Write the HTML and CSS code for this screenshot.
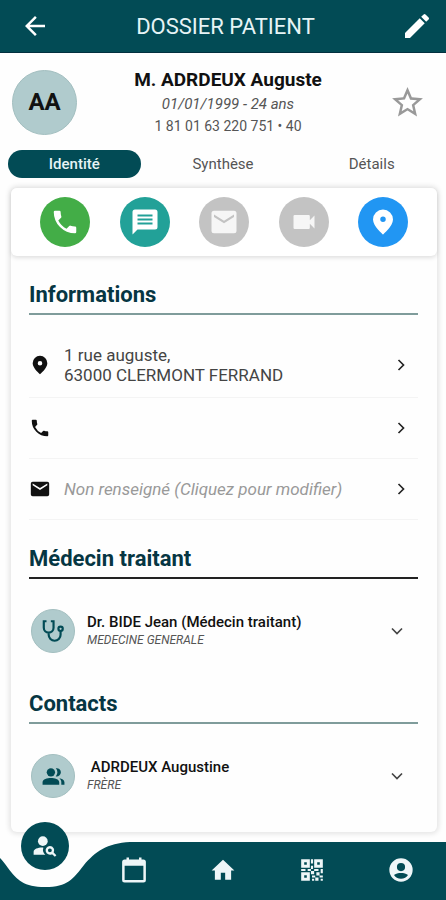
FILE: index.html
```html
<!DOCTYPE html>
<html lang="fr">
<head>
  <meta charset="UTF-8" />
  <meta name="viewport" content="width=device-width, initial-scale=1.0"/>
  <title>Dossier patient</title>
  <link rel="stylesheet" href="styles.css">
</head>
<body>

  <header class="top-bar">
    <button class="icon-btn" aria-label="Retour">
      <svg width="30" height="30" viewBox="0 0 24 24"><path d="M20 11H7.8l5.600-5.600L12 4l-8 8 8 8 1.400-1.400L7.800 13H20z"/></svg>
    </button>
    <h1>DOSSIER PATIENT</h1>
    <button class="icon-btn" aria-label="Modifier">
      <svg width="32" height="32" viewBox="0 0 24 24"><path d="M3 17.250V21h3.750L17.810 9.940l-3.750-3.750zM20.710 7.040a1 1 0 0 0 0-1.410l-2.340-2.340a1 1 0 0 0-1.410 0l-1.830 1.830 3.750 3.750z"/></svg>
    </button>
  </header>

  <section class="patient">
    <div class="avatar">AA</div>
    <div class="patient-text">
      <h2>M. ADRDEUX Auguste</h2>
      <p class="birth">01/01/1999 - 24 ans</p>
      <p class="number">1 81 01 63 220 751 • 40</p>
    </div>
    <button class="star-btn" aria-label="Favori">
      <svg width="37" height="37" viewBox="0 0 24 24"><path d="M22 9.240l-7.190-.62L12 2 9.190 8.630 2 9.240l5.460 4.730L5.820 21 12 17.270 18.180 21l-1.630-7.030zM12 15.400l-3.760 2.270 1-4.280-3.320-2.880 4.380-.38L12 6.100l1.710 4.040 4.380.38-3.320 2.880 1 4.280z"/></svg>
    </button>
  </section>

  <nav class="tabs">
    <button class="tab active">Identité</button>
    <button class="tab">Synthèse</button>
    <button class="tab">Détails</button>
  </nav>

  <main class="card">
    <div class="actions">
      <button class="action green" aria-label="Appeler">
        <svg width="30" height="30" viewBox="0 0 24 24"><path d="M6.620 10.790a15.150 15.150 0 0 0 6.590 6.590l2.200-2.200a1 1 0 0 1 1.020-.24c1.120.37 2.330.57 3.570.57a1 1 0 0 1 1 1V20a1 1 0 0 1-1 1A17 17 0 0 1 3 4a1 1 0 0 1 1-1h3.500a1 1 0 0 1 1 1c0 1.250.2 2.450.57 3.570a1 1 0 0 1-.25 1.020z"/></svg>
      </button>
      <button class="action teal" aria-label="Message">
        <svg width="30" height="30" viewBox="0 0 24 24"><path d="M20 2H4a2 2 0 0 0-2 2v18l4-4h14a2 2 0 0 0 2-2V4a2 2 0 0 0-2-2zM6 6h12v1.600H6zm0 3.200h12v1.600H6zm0 3.200h12V14H6z"/></svg>
      </button>
      <button class="action grey" aria-label="E-mail">
        <svg width="30" height="30" viewBox="0 0 24 24"><path d="M20 3H4a2 2 0 0 0-2 2v14a2 2 0 0 0 2 2h16a2 2 0 0 0 2-2V5a2 2 0 0 0-2-2zm0 5l-8 5-8-5V6l8 5 8-5z"/></svg>
      </button>
      <button class="action grey" aria-label="Vidéo">
        <svg width="28" height="28" viewBox="0 0 24 24"><path d="M17 10.500V7a1 1 0 0 0-1-1H4a1 1 0 0 0-1 1v10a1 1 0 0 0 1 1h12a1 1 0 0 0 1-1v-3.500l4 4v-11z"/></svg>
      </button>
      <button class="action blue" aria-label="Itinéraire">
        <svg width="30" height="30" viewBox="0 0 24 24"><path d="M12 2a8 8 0 0 0-8 8c0 5.500 8 12 8 12s8-6.500 8-12a8 8 0 0 0-8-8zm0 10a2.200 2.200 0 1 1 0-4.400 2.200 2.200 0 0 1 0 4.400z"/></svg>
      </button>
    </div>

    <section class="block">
      <h3>Informations</h3>
      <div class="list">
        <button class="info-row">
          <svg width="22" height="22" viewBox="0 0 24 24"><path d="M12 2a8 8 0 0 0-8 8c0 5.500 8 12 8 12s8-6.500 8-12a8 8 0 0 0-8-8zm0 10.500a2.500 2.500 0 1 1 0-5 2.500 2.500 0 0 1 0 5z"/></svg>
          <span class="info-text">1 rue auguste,<br>63000 CLERMONT FERRAND</span>
          <svg class="chevron" width="20" height="20" viewBox="0 0 24 24"><path d="M9 6l6 6-6 6"/></svg>
        </button>
        <button class="info-row" aria-label="Téléphone">
          <svg width="22" height="22" viewBox="0 0 24 24"><path d="M6.620 10.790a15.150 15.150 0 0 0 6.590 6.590l2.200-2.200a1 1 0 0 1 1.020-.24c1.120.37 2.330.57 3.570.57a1 1 0 0 1 1 1V20a1 1 0 0 1-1 1A17 17 0 0 1 3 4a1 1 0 0 1 1-1h3.500a1 1 0 0 1 1 1c0 1.250.2 2.450.57 3.570a1 1 0 0 1-.25 1.020z"/></svg>
          <span class="info-text"></span>
          <svg class="chevron" width="20" height="20" viewBox="0 0 24 24"><path d="M9 6l6 6-6 6"/></svg>
        </button>
        <button class="info-row">
          <svg width="22" height="22" viewBox="0 0 24 24"><path d="M20 4H4a2 2 0 0 0-2 2v12a2 2 0 0 0 2 2h16a2 2 0 0 0 2-2V6a2 2 0 0 0-2-2zm0 4l-8 5-8-5V6l8 5 8-5z"/></svg>
          <span class="info-text empty">Non renseigné (Cliquez pour modifier)</span>
          <svg class="chevron" width="20" height="20" viewBox="0 0 24 24"><path d="M9 6l6 6-6 6"/></svg>
        </button>
      </div>
    </section>

    <section class="block">
      <h3 class="dark-line">Médecin traitant</h3>
      <div class="list">
        <button class="person-row">
          <span class="person-icon">
            <svg class="outline" width="26" height="26" viewBox="0 0 24 24"><path d="M6 3H3.500v6a4.500 4.500 0 0 0 9 0V3H10M8 13.500v2a5.500 5.500 0 0 0 11 0V12"/><circle cx="19" cy="10" r="2"/></svg>
          </span>
          <span class="person-text">
            <span class="person-name">Dr. BIDE Jean (Médecin traitant)</span>
            <span class="person-role">MEDECINE GENERALE</span>
          </span>
          <svg class="chevron down" width="20" height="20" viewBox="0 0 24 24"><path d="M6 9l6 6 6-6"/></svg>
        </button>
      </div>
    </section>

    <section class="block">
      <h3>Contacts</h3>
      <div class="list">
        <button class="person-row">
          <span class="person-icon">
            <svg width="25" height="25" viewBox="0 0 24 24"><circle cx="9.500" cy="8" r="4"/><path d="M1.500 20v-2.500c0-2.700 4.500-4 8-4s8 1.300 8 4V20zM14.200 11.900a5.700 5.700 0 0 0 0-7.800 4 4 0 1 1 0 7.800zM17.500 13.700c2.700.5 5 1.700 5 3.800V20h-3v-2.500c0-1.600-.8-2.800-2-3.800z"/></svg>
          </span>
          <span class="person-text">
            <span class="person-name">&nbsp;ADRDEUX Augustine</span>
            <span class="person-role">FRÈRE</span>
          </span>
          <svg class="chevron down" width="20" height="20" viewBox="0 0 24 24"><path d="M6 9l6 6 6-6"/></svg>
        </button>
      </div>
    </section>
  </main>

  <nav class="bottom-nav">
    <svg class="notch" width="132" height="48" viewBox="0 0 132 48"><path d="M0 0H130C107 1 95 10 84 23C73 37 68 45 45 45C24 45 17 38 8 26Q3 19 0 16z"/></svg>
    <button class="search-btn" aria-label="Recherche patient">
      <svg width="26" height="26" viewBox="0 0 24 24"><circle cx="10" cy="7.500" r="4.500"/><path d="M1.500 20v-2.500c0-2.900 4.700-4.300 9-4a6 6 0 0 0 1.800 6.500z"/><path d="M16.500 12a4 4 0 1 0 2 7.500l2.600 2.500 1.400-1.400-2.500-2.600a4 4 0 0 0-3.500-6zm0 2.200a1.800 1.800 0 1 1 0 3.600 1.800 1.800 0 0 1 0-3.600z"/></svg>
    </button>
    <button class="nav-btn" aria-label="Agenda">
      <svg width="30" height="30" viewBox="0 0 24 24"><path d="M19.500 3.500H18V2h-2v1.500H8V2H6v1.500H4.500a2 2 0 0 0-2 2V20a2 2 0 0 0 2 2h15a2 2 0 0 0 2-2V5.500a2 2 0 0 0-2-2zm0 16.500h-15V8.500h15z"/></svg>
    </button>
    <button class="nav-btn" aria-label="Accueil">
      <svg width="26" height="26" viewBox="0 0 24 24"><path d="M10 21v-6.500h4V21h5.500v-8.500h3L12 2.500 1.500 12.500h3V21z"/></svg>
    </button>
    <button class="nav-btn" aria-label="QR code">
      <svg width="26" height="26" viewBox="0 0 24 24"><path fill-rule="evenodd" d="M2 2h8v8H2zM4.800 4.800v2.400h2.400V4.800zM14 2h8v8h-8zM16.800 4.800v2.400h2.400V4.800zM2 14h8v8H2zM4.800 16.800v2.400h2.400v-2.400zM11 2h2v4h-2zM11 8h2v3h-2zM2 11h4v2H2zM8 11h3v2H8zM11 13h3v3h-3zM14 11h4v2h-4zM20 11h2v4h-2zM16 14h3v3h-3zM12 17h3v2h-3zM12 20h2v2h-2zM15 19h3v3h-3zM19 17h3v2h-3zM20 20h2v2h-2z"/></svg>
    </button>
    <button class="nav-btn" aria-label="Profil">
      <svg width="28" height="28" viewBox="0 0 24 24"><path d="M12 2a10 10 0 1 0 0 20 10 10 0 0 0 0-20zm0 4a3.500 3.500 0 1 1 0 7 3.500 3.500 0 0 1 0-7zm0 13.500c-2.500 0-5-1.300-6-3.200 1-1.300 4-1.800 6-1.800s5 .5 6 1.800c-1 1.900-3.500 3.200-6 3.200z"/></svg>
    </button>
  </nav>

</body>
</html>
```

FILE: styles.css
```css
* {
  box-sizing: border-box;
}

body {
  font-family: Roboto, "Liberation Sans", sans-serif;
  background: #fefefe;
  color: #111;
  margin: 0;
  min-height: 100vh;
  display: flex;
  flex-direction: column;
}

h1, h2, h3, p {
  margin: 0;
}

button {
  padding: 0;
  border: none;
  background: none;
  color: inherit;
  font-family: inherit;
  cursor: pointer;
}

svg {
  display: block;
  fill: currentColor;
}

.top-bar {
  display: flex;
  align-items: center;
  justify-content: space-between;
  height: 53px;
  padding: 0 13px 0 20px;
  background: #024b55;
  border-bottom: 1px solid #02303f;
  color: #fff;
}

.top-bar h1 {
  font-size: 22px;
  font-weight: 400;
  color: #e6f4f6;
}

.patient {
  display: flex;
  align-items: center;
  padding: 14px 20px 13px 12px;
}

.avatar {
  display: flex;
  align-items: center;
  justify-content: center;
  width: 65px;
  height: 65px;
  border: 1px solid #a3bfc0;
  border-radius: 50%;
  background: #b0cbcd;
  font-size: 24px;
  font-weight: 700;
}

.patient-text {
  flex: 1;
  margin-right: 10px;
  text-align: center;
}

.patient-text h2 {
  font-size: 19px;
  line-height: 26px;
  font-weight: 700;
}

.patient-text p {
  line-height: 22px;
  color: #555;
}

.patient-text .birth {
  font-size: 15px;
  font-style: italic;
}

.patient-text .number {
  font-size: 14px;
}

.star-btn {
  color: #999;
}

.tabs {
  display: flex;
  gap: 16px;
  padding: 0 8px;
  margin-bottom: 10px;
}

.tab {
  flex: 1;
  height: 28px;
  border-radius: 14px;
  font-size: 15px;
  color: #555;
}

.tab.active {
  background: #024b55;
  color: #e6f4f6;
  font-weight: 500;
}

.card {
  margin: 0 9px 10px 11px;
  padding-bottom: 22px;
  border-radius: 6px;
  background: #fefefe;
  box-shadow: 0 0 5px 2px rgba(0,0,0,0.1);
}

.actions {
  display: flex;
  justify-content: space-between;
  padding: 9px 29px;
  border-radius: 6px;
  background: #fff;
  box-shadow: 0 2px 4px rgba(0,0,0,0.12);
}

.action {
  display: flex;
  align-items: center;
  justify-content: center;
  width: 50px;
  height: 50px;
  border-radius: 50%;
  color: #fff;
}

.green {
  background: #43ad47;
}

.teal {
  background: #22a198;
}

.grey {
  background: #c3c3c3;
  color: #f6f6f6;
}

.blue {
  background: #2196f3;
}

.block {
  padding: 26px 19px 0 18px;
}

.block h3 {
  padding-bottom: 5px;
  border-bottom: 2px solid #7f9c9b;
  font-size: 22px;
  line-height: 26px;
  font-weight: 700;
  color: #063643;
}

.block .dark-line {
  border-color: #222;
}

.list {
  margin-top: 18px;
}

.info-row {
  display: flex;
  align-items: center;
  width: 100%;
  min-height: 61px;
  padding: 12px 7px 12px 0;
  border-bottom: 1px solid #f4f4f4;
  text-align: left;
}

.info-text {
  flex: 1;
  margin-left: 13px;
  font-size: 17px;
  line-height: 20px;
  color: #444;
}

.empty {
  font-style: italic;
  color: #999;
}

.chevron {
  fill: none;
  stroke: #222;
  stroke-width: 2;
}

.down {
  stroke: #444;
}

.person-row {
  display: flex;
  align-items: center;
  width: 100%;
  height: 68px;
  padding: 0 11px 0 2px;
  text-align: left;
}

.person-icon {
  display: flex;
  align-items: center;
  justify-content: center;
  width: 44px;
  height: 44px;
  border: 1px solid #a3bfc0;
  border-radius: 50%;
  background: #b0cbcd;
  color: #024b55;
}

.outline {
  fill: none;
  stroke: currentColor;
  stroke-width: 2;
}

.person-text {
  display: flex;
  flex: 1;
  flex-direction: column;
  margin-left: 12px;
}

.person-name {
  font-size: 15px;
  line-height: 19px;
  font-weight: 500;
}

.person-role {
  font-size: 12px;
  line-height: 17px;
  font-style: italic;
  color: #555;
}

.bottom-nav {
  position: relative;
  display: flex;
  align-items: center;
  height: 58px;
  padding-bottom: 2px;
  margin-top: auto;
  background: #024b55;
  color: #eef6f8;
}

/* light wave cut into the bar, with the round button sitting in it */
.notch {
  position: absolute;
  top: 0;
  left: 0;
  color: #fefefe;
}

.search-btn {
  position: absolute;
  top: -20px;
  left: 21px;
  display: flex;
  align-items: center;
  justify-content: center;
  width: 48px;
  height: 48px;
  border-radius: 50%;
  background: #024b55;
}

.nav-btn {
  display: flex;
  flex: 1;
  justify-content: center;
}

.search-btn + .nav-btn {
  margin-left: 20%;
}
```
